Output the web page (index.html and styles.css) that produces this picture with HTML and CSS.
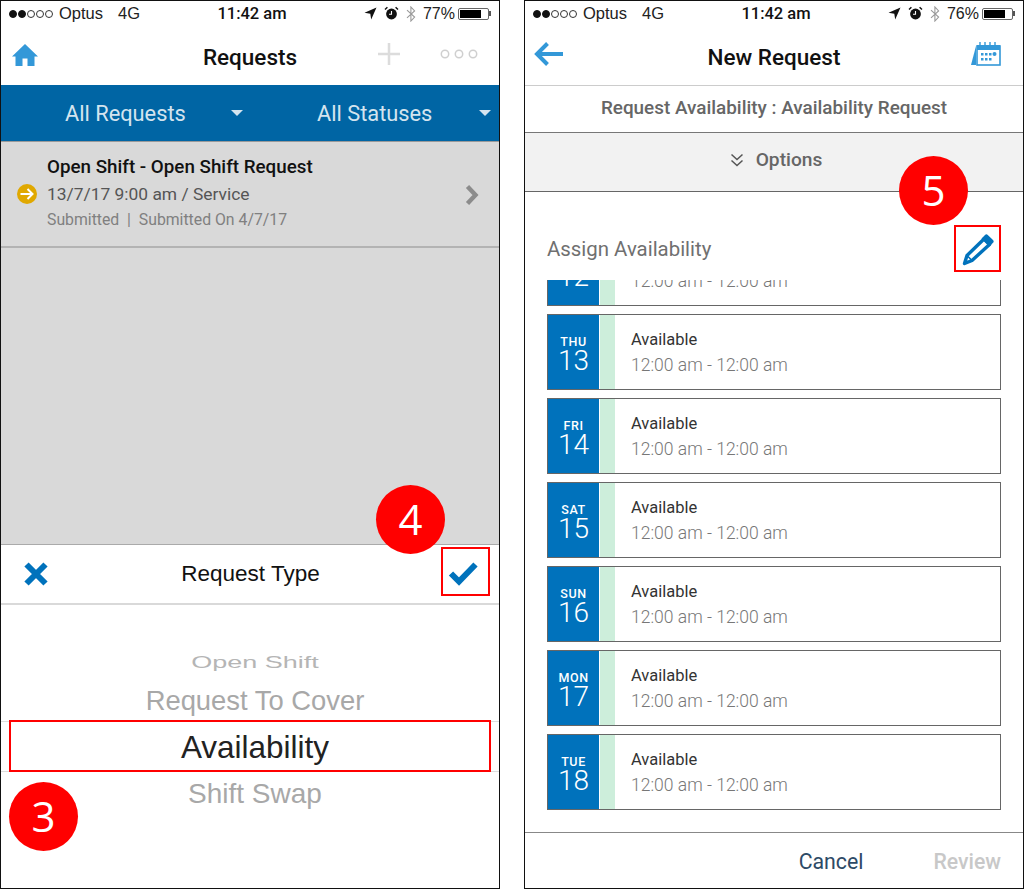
FILE: index.html
```html
<!DOCTYPE html>
<html lang="en">
<head>
<meta charset="utf-8">
<title>Requests</title>
<link rel="stylesheet" href="styles.css">
</head>
<body>
<main class="screens">
  <section class="phone">
    <header class="status">
      <div class="status-left">
        <span class="signal"><i class="dot on"></i><i class="dot on"></i><i class="dot"></i><i class="dot"></i><i class="dot"></i></span>
        <span>Optus</span><span class="net">4G</span>
      </div>
      <div class="status-time">11:42 am</div>
      <div class="status-right">
        <svg class="si" width="13" height="13" viewBox="0 0 13 13"><path d="M12.500.5 0.500 5.800 6.300 6.700 7.200 12.500z" fill="#111"/></svg>
        <svg class="si" width="15" height="15" viewBox="0 0 15 15"><circle cx="7.500" cy="8" r="5.400" fill="#111"/><path d="M7.500 5v3.300H5" fill="none" stroke="#fff" stroke-width="1.100"/><path d="M1 3.600 3.400 1.200M14 3.600 11.600 1.200" stroke="#111" stroke-width="1.400"/></svg>
        <svg class="si" width="10" height="16" viewBox="0 0 10 16"><path d="M1 4.200 8.600 11 4.900 15V1L8.600 5 1 11.800" fill="none" stroke="#999" stroke-width="1.100"/></svg>
        <span class="pct">77%</span>
        <span class="battery"><span class="fill f77"></span></span><span class="nub"></span>
      </div>
    </header>
    <nav class="nav">
      <svg class="home" width="26" height="22" viewBox="0 0 26 22"><path d="M13 0 26 12.500H22.500V22H15.500V14.500H10.500V22H3.500V12.500H0z" fill="#3398d8"/></svg>
      <h1 class="title">Requests</h1>
      <div class="nav-right">
        <svg class="plus" width="22" height="22" viewBox="0 0 22 22"><path d="M11 0V22M0 11H22" stroke="#dcdcdc" stroke-width="2.500"/></svg>
        <svg class="more" width="38" height="10" viewBox="0 0 38 10"><g fill="none" stroke="#cfcfcf" stroke-width="1.500"><circle cx="5" cy="5" r="3.700"/><circle cx="19" cy="5" r="3.700"/><circle cx="33" cy="5" r="3.700"/></g></svg>
      </div>
    </nav>
    <div class="filters">
      <div class="filter first"><span>All Requests</span><i class="caret"></i></div>
      <div class="filter second"><span>All Statuses</span><i class="caret"></i></div>
    </div>
    <div class="dimmed">
      <article class="req">
        <svg class="req-icon" width="20" height="20" viewBox="0 0 20 20"><circle cx="10" cy="10" r="10" fill="#e0a800"/><path d="M3.500 10H15M10.500 5 15.500 10 10.500 15" fill="none" stroke="#fff" stroke-width="2"/></svg>
        <div class="req-body">
          <div class="req-title">Open Shift - Open Shift Request</div>
          <div class="req-sub">13/7/17 9:00 am / Service</div>
          <div class="req-meta">Submitted&nbsp; | &nbsp;Submitted On 4/7/17</div>
        </div>
        <svg class="req-chev" width="15" height="20" viewBox="0 0 15 20"><path d="M2.500 1.500 10.500 10 2.500 18.500" fill="none" stroke="#8c8c8c" stroke-width="4.400"/></svg>
      </article>
    </div>
    <div class="sheet-head">
      <svg class="x" width="26" height="26" viewBox="0 0 26 26"><path d="M3.500 3.500 22.500 22.500M22.500 3.500 3.500 22.500" stroke="#0072bc" stroke-width="6"/></svg>
      <div class="sheet-title">Request Type</div>
      <svg class="check" width="30" height="24" viewBox="0 0 30 24"><path d="M3 11.500 11 19.500 27.500 2.500" fill="none" stroke="#0072bc" stroke-width="6"/></svg>
    </div>
    <div class="picker">
      <div class="pick p1">Open Shift</div>
      <div class="pick p2">Request To Cover</div>
      <div class="pick p3">Availability</div>
      <div class="pick p4">Shift Swap</div>
    </div>
    <div class="hl hl-pick"></div>
    <div class="hl hl-check"></div>
    <div class="badge b3">3</div>
    <div class="badge b4">4</div>
  </section>

  <section class="phone">
    <header class="status">
      <div class="status-left">
        <span class="signal"><i class="dot on"></i><i class="dot on"></i><i class="dot"></i><i class="dot"></i><i class="dot"></i></span>
        <span>Optus</span><span class="net">4G</span>
      </div>
      <div class="status-time">11:42 am</div>
      <div class="status-right">
        <svg class="si" width="13" height="13" viewBox="0 0 13 13"><path d="M12.500.5 0.500 5.800 6.300 6.700 7.200 12.500z" fill="#111"/></svg>
        <svg class="si" width="15" height="15" viewBox="0 0 15 15"><circle cx="7.500" cy="8" r="5.400" fill="#111"/><path d="M7.500 5v3.300H5" fill="none" stroke="#fff" stroke-width="1.100"/><path d="M1 3.600 3.400 1.200M14 3.600 11.600 1.200" stroke="#111" stroke-width="1.400"/></svg>
        <svg class="si" width="10" height="16" viewBox="0 0 10 16"><path d="M1 4.200 8.600 11 4.900 15V1L8.600 5 1 11.800" fill="none" stroke="#999" stroke-width="1.100"/></svg>
        <span class="pct">76%</span>
        <span class="battery"><span class="fill f76"></span></span><span class="nub"></span>
      </div>
    </header>
    <nav class="nav nav-lined">
      <svg class="back" width="30" height="24" viewBox="0 0 30 24"><path d="M29 12H4M13.500 1.500 3 12 13.500 22.500" fill="none" stroke="#3398d8" stroke-width="4"/></svg>
      <h1 class="title">New Request</h1>
      <div class="nav-right">
        <svg class="cal" width="31" height="24" viewBox="0 0 31 24"><path d="M6 4 1 23H6z" fill="#3398d8"/><rect x="7" y="4" width="23" height="19" fill="#fff" stroke="#3398d8" stroke-width="1.600"/><rect x="7" y="3" width="23" height="5" fill="#3398d8"/><g stroke="#3398d8" stroke-width="1.400"><path d="M10 0V4M15 0V4M20 0V4M25 0V4"/></g><g fill="#3398d8"><rect x="11" y="11" width="2.500" height="2.500"/><rect x="15" y="11" width="2.500" height="2.500"/><rect x="19" y="11" width="2.500" height="2.500"/><circle cx="24.500" cy="12" r="2"/><rect x="11" y="16" width="2.500" height="2.500"/><rect x="15" y="16" width="2.500" height="2.500"/><rect x="19" y="16" width="2.500" height="2.500"/></g></svg>
      </div>
    </nav>
    <div class="subtitle">Request Availability : Availability Request</div>
    <div class="options">
      <svg width="14" height="14" viewBox="0 0 14 14"><path d="M1.500 1.500 7 6.500 12.500 1.500M1.500 7.500 7 12.500 12.500 7.500" fill="none" stroke="#555" stroke-width="1.500"/></svg>
      <span>Options</span>
    </div>
    <div class="assign">
      <span class="assign-label">Assign Availability</span>
      <svg class="pencil" width="32" height="32" viewBox="0 0 32 32"><path d="M22 5 27.500 10.500 10 26.500 2.500 29.500 5 21.500z" fill="#fff" stroke="#0072bc" stroke-width="3.400" stroke-linejoin="round"/><path d="M19.500 4.500 23 1a2 2 0 0 1 2.800 0L31 6a2 2 0 0 1 0 2.800L27.500 12.500z" fill="#0072bc"/><path d="M5 21.500 10 26.500" stroke="#0072bc" stroke-width="1.600"/></svg>
    </div>
    <div class="list">
      <div class="list-inner">
        <article class="card"><div class="date"><b></b><span>12</span></div><div class="stripe"></div><div class="info"><div class="avail"></div><div class="hours">12:00 am - 12:00 am</div></div></article>
        <article class="card"><div class="date"><b>THU</b><span>13</span></div><div class="stripe"></div><div class="info"><div class="avail">Available</div><div class="hours">12:00 am - 12:00 am</div></div></article>
        <article class="card"><div class="date"><b>FRI</b><span>14</span></div><div class="stripe"></div><div class="info"><div class="avail">Available</div><div class="hours">12:00 am - 12:00 am</div></div></article>
        <article class="card"><div class="date"><b>SAT</b><span>15</span></div><div class="stripe"></div><div class="info"><div class="avail">Available</div><div class="hours">12:00 am - 12:00 am</div></div></article>
        <article class="card"><div class="date"><b>SUN</b><span>16</span></div><div class="stripe"></div><div class="info"><div class="avail">Available</div><div class="hours">12:00 am - 12:00 am</div></div></article>
        <article class="card"><div class="date"><b>MON</b><span>17</span></div><div class="stripe"></div><div class="info"><div class="avail">Available</div><div class="hours">12:00 am - 12:00 am</div></div></article>
        <article class="card"><div class="date"><b>TUE</b><span>18</span></div><div class="stripe"></div><div class="info"><div class="avail">Available</div><div class="hours">12:00 am - 12:00 am</div></div></article>
      </div>
    </div>
    <footer class="foot">
      <span class="cancel">Cancel</span>
      <span class="review">Review</span>
    </footer>
    <div class="hl hl-pencil"></div>
    <div class="badge b5">5</div>
  </section>
</main>
</body>
</html>
```

FILE: styles.css
```css
* { box-sizing: border-box; }
html, body { margin: 0; padding: 0; background: #fff; }
body { font-family: Roboto, "Liberation Sans", sans-serif; }
h1 { margin: 0; }

.screens { display: flex; gap: 24px; width: 1024px; height: 889px; }
.phone {
  position: relative;
  display: flex;
  flex-direction: column;
  width: 500px;
  height: 889px;
  border: 1px solid #111;
  background: #fff;
  overflow: hidden;
}

/* status bar */
.status {
  flex: none;
  display: grid;
  grid-template-columns: 1fr auto 1fr;
  align-items: center;
  height: 27px;
  padding: 0 8px 2px 8px;
  font-family: "Liberation Sans", sans-serif;
  font-size: 16.500px;
  color: #222;
}
.status-left { display: flex; align-items: center; }
.signal { display: flex; gap: 1px; margin-right: 6px; }
.dot { width: 8px; height: 8px; border: 1px solid #333; border-radius: 50%; }
.dot.on { background: #111; border-color: #111; }
.net { margin-left: 15px; }
.status-time { font-family: Roboto, sans-serif; font-weight: 500; font-size: 16.500px; color: #111; padding-left: 4px; }
.status-right { display: flex; align-items: center; justify-content: flex-end; }
.si { margin-right: 7px; }
.pct { margin-right: 3px; font-size: 16px; }
.battery { width: 31px; height: 12px; border: 1px solid #666; border-radius: 2px; padding: 1px; display: flex; }
.fill { display: block; height: 100%; background: #000; }
.f77 { width: 77%; }
.f76 { width: 76%; }
.nub { width: 2px; height: 5px; background: #555; }

/* nav */
.nav {
  flex: none;
  display: grid;
  grid-template-columns: 1fr auto 1fr;
  align-items: center;
  height: 57px;
  padding: 0 10px;
}
.title {
  font-family: Roboto, sans-serif;
  font-size: 22.500px;
  font-weight: 500;
  color: #111;
}
.nav-right { display: flex; align-items: center; justify-content: flex-end; }
.home { margin: -4px 0 0 1px; }
.plus { margin: -5px 40px 0 0; }
.more { margin: -5px 11px 0 0; }
.nav-lined { height: 58px; border-bottom: 1px solid #ccc; }
.back { margin: -6px 0 0 -1px; }
.cal { margin: -6px 12px 0 0; }

/* left: filters */
.filters {
  flex: none;
  display: flex;
  height: 57px;
  background: #0065a4;
  border-bottom: 1px solid #9a9a9a;
  color: #d4e4ef;
  font-size: 21.800px;
}
.filter { display: flex; align-items: center; }
.filter.first { width: 250px; padding-left: 64px; }
.filter.second { flex: 1; padding-left: 66px; }
.caret { width: 0; height: 0; margin-left: 45px; border: 6px solid transparent; border-top: 6px solid #d4e4ef; border-bottom: 0; }
.filter.second .caret { margin-left: 47px; }

.dimmed { flex: 1; background: #d9d9d9; border-bottom: 1px solid #aaa; }
.req {
  display: flex;
  align-items: center;
  height: 106px;
  padding: 0 19px 0 16px;
  border-bottom: 2px solid #b3b3b3;
}
.req-icon { flex: none; margin: 0 10px 0 0; }
.req-body { flex: 1; padding-bottom: 1px; }
.req-title { font-size: 18.800px; font-weight: 500; color: #111; line-height: 25px; }
.req-sub { font-size: 17.400px; color: #555; line-height: 28px; }
.req-meta { font-size: 15.800px; color: #808080; line-height: 24px; }
.req-chev { margin: 2px 0 0 0; }

/* left: sheet */
.sheet-head {
  flex: none;
  display: grid;
  grid-template-columns: 1fr auto 1fr;
  align-items: center;
  height: 60px;
  padding: 0 21px 0 22px;
  border-bottom: 2px solid #d9d9d9;
}
.check { justify-self: end; }
.sheet-title { font-size: 22.500px; color: #111; font-family: "Liberation Sans", sans-serif; }
.picker {
  flex: none;
  display: flex;
  flex-direction: column;
  align-items: center;
  height: 283px;
  padding-top: 43px;
  padding-left: 10px;
  font-family: "Liberation Sans", sans-serif;
  color: #a8a8a8;
}
.pick { text-align: center; }
.p1 { height: 28px; line-height: 28px; font-size: 27px; transform: scaleY(.62); color: #b5b5b5; }
.p2 { height: 43px; line-height: 45px; font-size: 27.400px; margin-top: 2px; }
.p3 {
  align-self: stretch;
  height: 51px;
  margin: 0 0 0 -10px;
  padding-left: 10px;
  line-height: 50px;
  font-size: 31.500px;
  color: #222;
  border-top: 1px solid #ddd;
  border-bottom: 1px solid #ddd;
}
.p4 { height: 44px; line-height: 43px; font-size: 28px; }

/* right */
.subtitle {
  flex: none;
  height: 47px;
  padding-bottom: 3px;
  display: flex;
  align-items: center;
  justify-content: center;
  font-size: 18.900px;
  font-weight: 500;
  color: #666;
  border-bottom: 1px solid #777;
}
.options {
  flex: none;
  height: 59px;
  padding: 0 0 5px 4px;
  display: flex;
  align-items: center;
  justify-content: center;
  gap: 12px;
  background: #f2f2f2;
  border-bottom: 1px solid #666;
  font-size: 19.200px;
  font-weight: 500;
  color: #666;
}
.assign {
  flex: none;
  display: flex;
  align-items: center;
  justify-content: space-between;
  height: 88px;
  padding: 27px 29px 0 22px;
  font-size: 20.400px;
  color: #707070;
}
.assign-label { margin-top: -2px; }
.list { flex: none; height: 553px; overflow: hidden; padding: 0 22px; border-bottom: 1px solid #888; }
.list-inner { display: flex; flex-direction: column; gap: 8px; margin-top: -50px; }
.card {
  flex: none;
  display: flex;
  height: 76px;
  border: 1px solid #666;
  background: #fff;
}
.date {
  flex: none;
  width: 51px;
  padding-top: 5px;
  display: flex;
  flex-direction: column;
  align-items: center;
  justify-content: center;
  background: #0072bc;
  color: #fff;
}
.date b { display: block; height: 13px; font-size: 12.500px; font-weight: 500; line-height: 13px; margin-top: -1px; letter-spacing: .6px; }
.date span { font-size: 28px; font-weight: 300; line-height: 26px; }
.stripe { flex: none; width: 15px; margin-left: 1px; background: #cdeedb; }
.info { padding: 12px 0 0 16px; }
.avail { height: 25px; font-size: 16.500px; color: #333; line-height: 26px; }
.hours { font-size: 17.500px; font-weight: 300; color: #777; line-height: 26px; }
.foot {
  flex: 1;
  display: flex;
  align-items: center;
  justify-content: flex-end;
  gap: 70px;
  padding: 2px 22px 0 0;
  font-size: 21.300px;
}
.cancel { color: #2d4a66; }
.review { color: #c8c8c8; font-weight: 500; font-size: 21.200px; }

/* overlays */
.hl { position: absolute; border: 2px solid #f00; }
.hl-pick { left: 8px; top: 719px; width: 482px; height: 52px; }
.hl-check { left: 440px; top: 546px; width: 49px; height: 49px; }
.hl-pencil { left: 429px; top: 224px; width: 47px; height: 47px; }
.badge {
  position: absolute;
  width: 69px;
  height: 69px;
  border-radius: 50%;
  background: #f00;
  color: #fff;
  font-family: "Open Sans", sans-serif;
  font-size: 42px;
  line-height: 67px;
  text-align: center;
}
.b3 { left: 8px; top: 781px; }
.b4 { left: 375px; top: 484px; }
.b5 { left: 374px; top: 155px; }
```
